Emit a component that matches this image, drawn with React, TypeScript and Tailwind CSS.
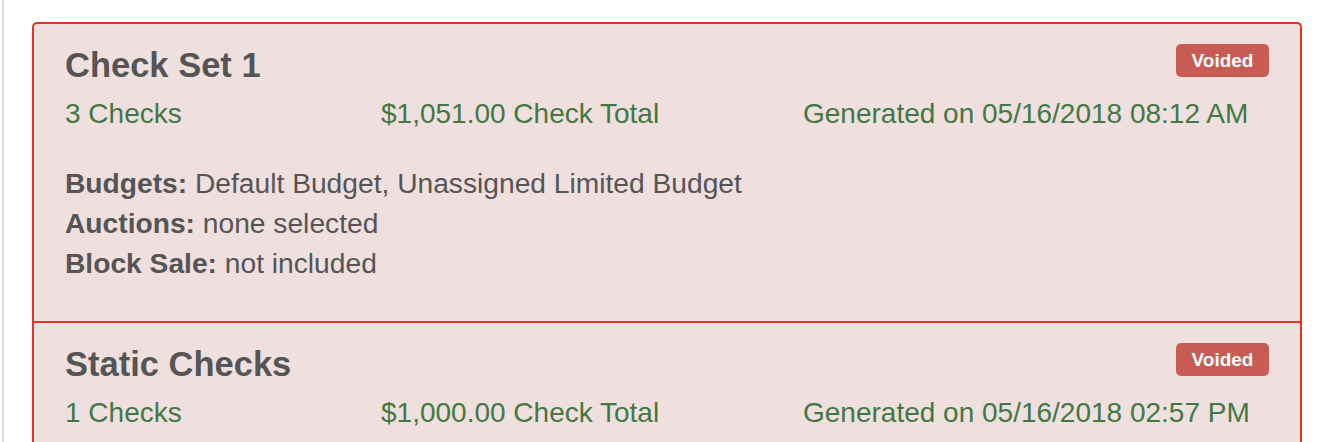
import React from "react";

type Item = {
  title: string;
  checks: string;
  total: string;
  generated: string;
  details?: { label: string; value: string }[];
};

const items: Item[] = [
  {
    title: "Check Set 1",
    checks: "3 Checks",
    total: "$1,051.00 Check Total",
    generated: "Generated on 05/16/2018 08:12 AM",
    details: [
      { label: "Budgets:", value: "Default Budget, Unassigned Limited Budget" },
      { label: "Auctions:", value: "none selected" },
      { label: "Block Sale:", value: "not included" },
    ],
  },
  {
    title: "Static Checks",
    checks: "1 Checks",
    total: "$1,000.00 Check Total",
    generated: "Generated on 05/16/2018 02:57 PM",
    details: [
      { label: "Budgets:", value: "Default Budget" },
      { label: "Auctions:", value: "none selected" },
      { label: "Block Sale:", value: "not included" },
    ],
  },
];

function CheckSet({ item, first }: { item: Item; first: boolean }) {
  return (
    <div
      className={`px-[31px] pt-[20px] pb-[38px] ${first ? "" : "border-t-2 border-[#e5332c]"}`}
    >
      <div className="flex items-start justify-between">
        <h3 className="text-[34.5px] leading-[42px] font-bold text-[#555555]">{item.title}</h3>
        <span className="h-[33px] w-[93px] rounded-[5px] bg-[#c95b55] text-white font-bold text-[19px] leading-[33px] text-center">
          Voided
        </span>
      </div>
      <div className="mt-[10px] flex text-[28px] leading-[36px] text-[#437843]">
        <div className="w-[316px]">{item.checks}</div>
        <div className="w-[422px]">{item.total}</div>
        <div className="flex-1">{item.generated}</div>
      </div>
      {item.details && (
        <div className="mt-[31px] text-[28.2px] leading-[40px] text-[#555555]">
          {item.details.map((d) => (
            <div key={d.label}>
              <span className="font-bold">{d.label}</span> {d.value}
            </div>
          ))}
        </div>
      )}
    </div>
  );
}

export default function App() {
  return (
    <div
      className="w-[1340px] h-[442px] overflow-hidden bg-white flex"
      style={{ fontFamily: '"Liberation Sans", Arial, Helvetica, sans-serif' }}
    >
      <div className="ml-[2px] w-[2px] bg-[#dedede] shrink-0" />
      <div className="pl-[28px] pt-[22px] w-[1298px] shrink-0">
        <div className="border-2 border-b-0 border-[#e5332c] rounded-t-[5px] bg-[#efdfdf]">
          {items.map((it, i) => (
            <CheckSet key={it.title} item={it} first={i === 0} />
          ))}
        </div>
      </div>
    </div>
  );
}
